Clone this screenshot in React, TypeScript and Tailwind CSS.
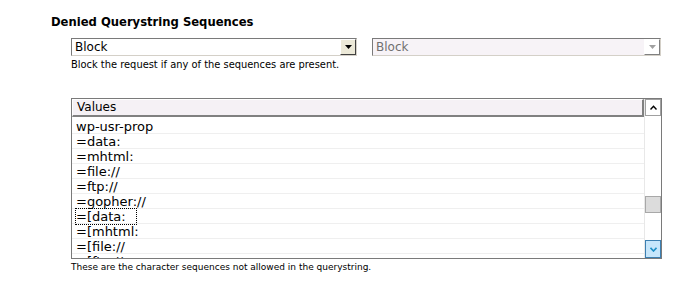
import React from 'react';

const values = [
  'wp-usr-prop',
  '=data:',
  '=mhtml:',
  '=file://',
  '=ftp://',
  '=gopher://',
  '=[data:',
  '=[mhtml:',
  '=[file://',
  '=[ftp://',
];

// Little triangle used inside the drop-down buttons
const Caret: React.FC<{ color: string }> = ({ color }) => (
  <svg width="7" height="4" viewBox="0 0 7 4">
    <path d="M0 0h7L3.5 4z" fill={color} />
  </svg>
);

const App: React.FC = () => {
  return (
    <div className="w-[697px] h-[285px] bg-white pl-[51px] pt-[14px] font-['DejaVu_Sans',sans-serif] text-black">
      <h2 className="text-[11.6px] leading-[16px] font-bold">Denied Querystring Sequences</h2>

      <div className="ml-[20px] mt-[8px]">
        {/* drop-downs */}
        <div className="flex gap-[15px]">
          <div className="w-[286px] h-[18px] flex items-center border border-t-[#7a7a7a] border-l-[#7a7a7a] border-r-[#d4d0c8] border-b-[#d4d0c8] bg-white">
            <span className="flex-1 pl-[3px] text-[12px] leading-[16px]">Block</span>
            <div className="w-[16px] h-[16px] flex items-center justify-center bg-[#ece9d8] border border-t-white border-l-white border-r-[#404040] border-b-[#404040]">
              <Caret color="#000" />
            </div>
          </div>
          <div className="w-[289px] h-[18px] flex items-center border border-t-[#7a7a7a] border-l-[#7a7a7a] border-r-[#d4d0c8] border-b-[#d4d0c8] bg-[#f7f3f7]">
            <span className="flex-1 pl-[3px] text-[12px] leading-[16px] text-[#707070]">Block</span>
            <div className="w-[16px] h-[16px] flex items-center justify-center bg-white border border-t-white border-l-white border-r-[#808080] border-b-[#808080]">
              <Caret color="#a0a0a0" />
            </div>
          </div>
        </div>
        <p className="mt-[3px] text-[9.9px] leading-[12px]">Block the request if any of the sequences are present.</p>

        {/* values list */}
        <div className="mt-[27px] w-[591px] h-[161px] border border-[#7a7a7a] flex overflow-hidden">
          <div className="flex-1 flex flex-col overflow-hidden">
            <div className="h-[18px] shrink-0 bg-[#f5f1f5] border-r-2 border-b-2 border-r-[#808080] border-b-[#808080] border-t border-l border-t-white border-l-white pl-[4px] text-[12px] leading-[15px]">
              Values
            </div>
            <div className="pt-[2px] overflow-hidden">
              {values.map((v, i) => (
                <div key={v} className="h-[15px] border-b border-[#efefef] pl-[4px] text-[13px] leading-[15px]">
                  <span className={i === 6 ? 'outline outline-1 outline-dotted outline-black pr-[10px]' : ''}>{v}</span>
                </div>
              ))}
            </div>
          </div>

          {/* scrollbar */}
          <div className="w-[17px] flex flex-col border-l border-[#e8e8e8] bg-white">
            <div className="h-[17px] flex items-center justify-center border border-[#a0a0a0] bg-white">
              <svg width="7" height="5" viewBox="0 0 7 5">
                <path d="M0.5 4.5L3.5 1.2L6.5 4.5" stroke="#000" strokeWidth="1.4" fill="none" />
              </svg>
            </div>
            <div className="flex-1 flex flex-col">
              <div className="h-[80px]" />
              <div className="h-[17px] bg-[#dcdcdc] border border-[#a8a8a8]" />
            </div>
            <div className="h-[18px] flex items-center justify-center border border-[#3c7fb1] bg-[#c6e6fb]">
              <svg width="7" height="5" viewBox="0 0 7 5">
                <path d="M0.5 0.8L3.5 4L6.5 0.8" stroke="#1e8fc6" strokeWidth="1.6" fill="none" />
              </svg>
            </div>
          </div>
        </div>
        <p className="mt-[2px] text-[9px] leading-[12px]">These are the character sequences not allowed in the querystring.</p>
      </div>
    </div>
  );
};

export default App;
